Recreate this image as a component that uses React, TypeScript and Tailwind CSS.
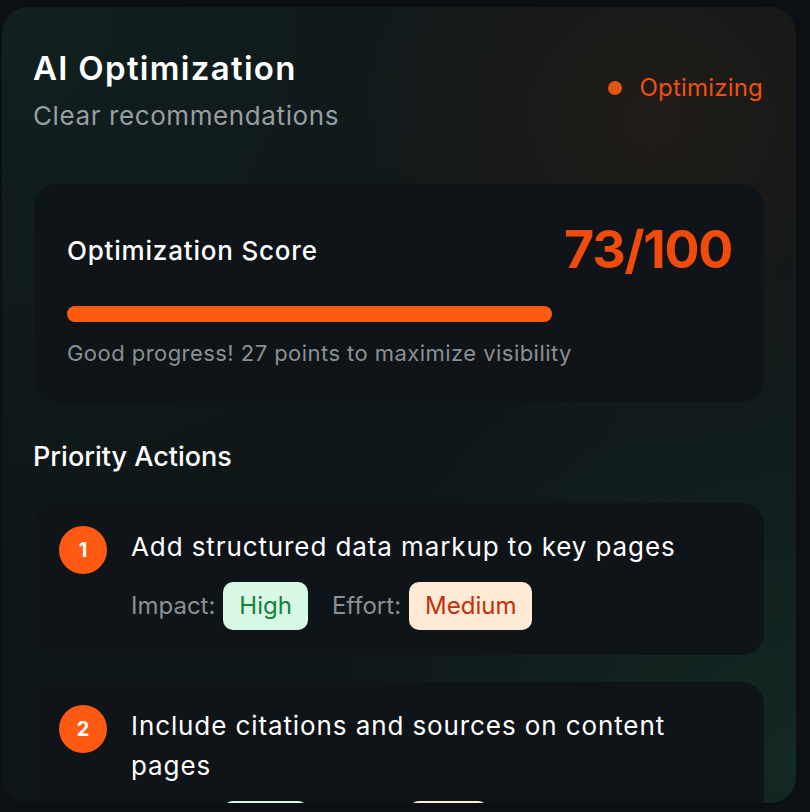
const actions = [
  { n: 1, title: "Add structured data markup to key pages", impact: "High", effort: "Medium" },
  { n: 2, title: "Include citations and sources on content pages", impact: "High", effort: "Low" },
];

function Tag({ label, value, tone }: { label: string; value: string; tone: "green" | "orange" }) {
  return (
    <div className="flex items-center gap-2">
      <span className="text-[24px] text-[#8b9094]">{label}</span>
      <span
        className={
          tone === "green"
            ? "rounded-[10px] bg-[#d7f8e4] px-4 py-2.5 text-[24px] leading-7 text-[#15803d]"
            : "rounded-[10px] bg-[#ffead6] px-4 py-2.5 text-[24px] leading-7 text-[#c2300a]"
        }
      >
        {value}
      </span>
    </div>
  );
}

export default function App() {
  const score = 73;
  return (
    <div className="h-[812px] overflow-hidden bg-[#0c1014] pl-[2px] pr-[14px] pt-[7px] font-['Inter',sans-serif]">
      <div className="h-[796px] overflow-hidden rounded-[26px] bg-[#0f1618] bg-[radial-gradient(circle_at_82%_14%,rgba(255,110,30,0.07),transparent_35%),radial-gradient(circle_at_100%_95%,rgba(30,90,65,0.28),transparent_45%),radial-gradient(circle_at_0%_0%,rgba(20,50,45,0.35),transparent_50%)] pl-[31px] pr-[32px] pt-[41px]">
        {/* Header */}
        <div className="flex items-center justify-between">
          <div>
            <h1 className="text-[33px] font-semibold leading-10 tracking-[1.3px] text-white">AI Optimization</h1>
            <p className="mt-3 text-[26px] leading-8 tracking-[0.6px] text-[#9a9ea1]">Clear recommendations</p>
          </div>
          <div className="mb-1 flex items-center gap-[17px] pr-[1px]">
            <span className="h-[14px] w-[14px] rounded-full bg-[#e25412]" />
            <span className="text-[24px] tracking-[0.2px] text-[#f0500f]">Optimizing</span>
          </div>
        </div>

        {/* Score */}
        <div className="ml-[2px] mt-[52px] rounded-[22px] bg-[#0e1417] px-8 pb-[35px] pt-10">
          <div className="flex items-center justify-between">
            <span className="text-[26px] font-medium tracking-[0.8px] text-white">Optimization Score</span>
            <span className="text-[52px] font-bold leading-none tracking-tight text-[#f04a0c]">{score}/100</span>
          </div>
          <div className="mt-[30px] h-4 w-full rounded-full">
            <div className="h-4 rounded-full bg-[#ff5b10]" style={{ width: `${score}%` }} />
          </div>
          <p className="mt-[17px] text-[22px] leading-7 tracking-[0.45px] text-[#8b9094]">
            Good progress! 27 points to maximize visibility
          </p>
        </div>

        {/* Priority actions */}
        <h2 className="mt-[39px] text-[27px] font-medium leading-8 text-white">Priority Actions</h2>
        <div className="ml-[2px] mt-[30px] flex flex-col gap-[27px]">
          {actions.map((a) => (
            <div key={a.n} className="flex items-start gap-6 rounded-[22px] bg-[#0e1417] px-6 pb-[25px] pt-[23px]">
              <div className="flex h-12 w-12 shrink-0 items-center justify-center rounded-full bg-[#ff5a14] text-[20px] font-bold text-white">
                {a.n}
              </div>
              <div className="pt-[1px]">
                <p className="text-[26px] leading-10 tracking-[0.9px] text-white">{a.title}</p>
                <div className="mt-[15px] flex items-center gap-6">
                  <Tag label="Impact:" value={a.impact} tone="green" />
                  <Tag label="Effort:" value={a.effort} tone="orange" />
                </div>
              </div>
            </div>
          ))}
        </div>
      </div>
    </div>
  );
}
